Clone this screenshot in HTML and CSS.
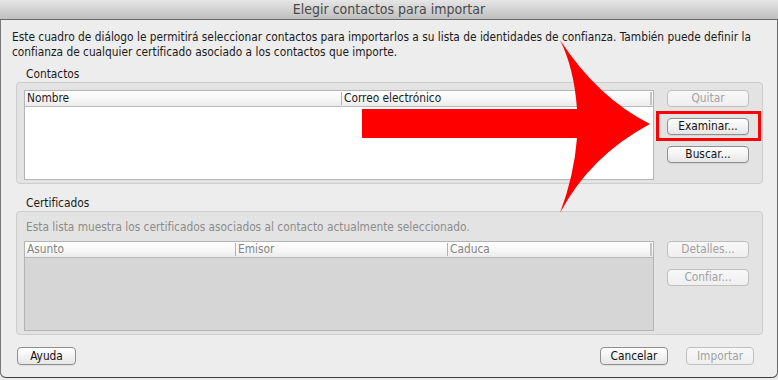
FILE: index.html
```html
<!DOCTYPE html>
<html lang="es">
<head>
  <meta charset="UTF-8" />
  <title>Elegir contactos para importar</title>
  <link rel="stylesheet" href="styles.css">
</head>
<body>
  <div class="window">
    <div class="titlebar">Elegir contactos para importar</div>

    <p class="intro">Este cuadro de diálogo le permitirá seleccionar contactos para importarlos a su lista de identidades de confianza. También puede definir la<br>confianza de cualquier certificado asociado a los contactos que importe.</p>

    <div class="group-label">Contactos</div>
    <div class="group">
      <div class="table contacts">
        <div class="thead">
          <span class="col col-nombre">Nombre</span>
          <span class="col col-correo">Correo electrónico</span>
          <span class="col col-end"></span>
        </div>
      </div>
      <div class="buttons">
        <button class="btn" disabled>Quitar</button>
        <button class="btn">Examinar...</button>
        <button class="btn">Buscar...</button>
      </div>
    </div>

    <div class="group-label">Certificados</div>
    <div class="group certs">
      <p class="note">Esta lista muestra los certificados asociados al contacto actualmente seleccionado.</p>
      <div class="row">
        <div class="table certificates">
          <div class="thead">
            <span class="col col-asunto">Asunto</span>
            <span class="col col-emisor">Emisor</span>
            <span class="col col-caduca">Caduca</span>
            <span class="col col-end"></span>
          </div>
        </div>
        <div class="buttons">
          <button class="btn" disabled>Detalles...</button>
          <button class="btn" disabled>Confiar...</button>
        </div>
      </div>
    </div>

    <div class="footer">
      <button class="btn btn-help">Ayuda</button>
      <div class="footer-right">
        <button class="btn btn-wide">Cancelar</button>
        <button class="btn btn-wide" disabled>Importar</button>
      </div>
    </div>

    <!-- annotation drawn over the dialog -->
    <div class="highlight"></div>
    <svg class="arrow" viewBox="0 0 778 380" width="778" height="380">
      <path fill="#ff0000" d="M362 109 L577 109 Q574 68 560 40 Q598 98 650 124 Q590 156 560 213 Q574 176 577 138 L362 138 Z" />
    </svg>
  </div>
</body>
</html>
```

FILE: styles.css
```css
body { margin: 0; background: #ececec; font-family: "DejaVu Sans Condensed", "DejaVu Sans", sans-serif; font-size: 11.8px; color: #1a1a1a; }
.window { position: relative; width: 778px; height: 378px; box-sizing: border-box; background: #ededed; border-radius: 0 0 6px 6px; box-shadow: inset 1px 0 #7a7a7a, inset -1px 0 #6b6b6b, inset 0 -1px #3c3c3c; overflow: hidden; }
.titlebar { height: 19px; line-height: 19px; border-bottom: 1px solid #6b6b6b; background: linear-gradient(#e6e6e6, #bfbfbf); text-align: center; font-size: 14px; color: #4a4a4a; }

.intro { margin: 0; padding: 10px 12px 0; line-height: 15px; white-space: nowrap; }
.group-label { margin: 7px 0 1px 26px; line-height: 14px; }
.group-label + .group + .group-label { margin-top: 12px; }

.group { display: flex; gap: 13px; margin: 0 15px 0 16px; padding: 7px 12px 3px 7px; border: 1px solid #cdcdcd; border-radius: 4px; background: #e3e3e3; }
.group.certs { display: block; padding: 8px 12px 3px 7px; }
.note { margin: 0 0 6px 2px; line-height: 15px; color: #8c8c8c; white-space: nowrap; }
.row { display: flex; gap: 13px; }

.table { width: 630px; box-sizing: border-box; border: 1px solid #b4b4b4; background: #fff; }
.contacts { height: 90px; }
.certificates { height: 90px; background: #d6d6d6; }
.thead { display: flex; height: 15px; border-bottom: 1px solid #b9b9b9; background: linear-gradient(#ffffff, #f6f6f6 60%, #ebebeb); }
.col { display: block; margin: 1px 0; line-height: 13px; padding-left: 2px; border-left: 1px solid #b3b3b3; white-space: nowrap; }
.col:first-child { border-left: 0; padding-left: 2px; }
.col-nombre { width: 314px; }
.col-correo { width: 306px; }
.col-asunto { width: 208px; }
.col-emisor { width: 209px; }
.col-caduca { width: 200px; }
.col-end { flex: 1; padding: 0; border-left: 2px solid #c4c4c4; }
.certificates .col { color: #858585; }

.buttons { display: flex; flex-direction: column; gap: 11px; }
.btn { width: 82px; height: 17px; padding: 0; font: inherit; line-height: 15px; color: #111; border: 1px solid #8f8f8f; border-radius: 4px; background: linear-gradient(#ffffff, #f3f3f3 50%, #e6e6e6); box-shadow: 0 1px 0 rgba(0, 0, 0, 0.06); }
.btn:disabled { color: #a2a2a2; border-color: #c0c0c0; background: linear-gradient(#f8f8f8, #efefef); box-shadow: none; }

.footer { display: flex; justify-content: space-between; padding: 12px 24px 0 17px; }
.footer-right { display: flex; gap: 18px; }
.footer .btn { height: 18px; }
.btn-help { width: 59px; }
.btn-wide { width: 68px; }

.highlight { position: absolute; left: 656px; top: 111px; width: 105px; height: 30px; box-sizing: border-box; border: 3px solid #ff0000; }
.arrow { position: absolute; left: 0; top: 0; pointer-events: none; }
```
